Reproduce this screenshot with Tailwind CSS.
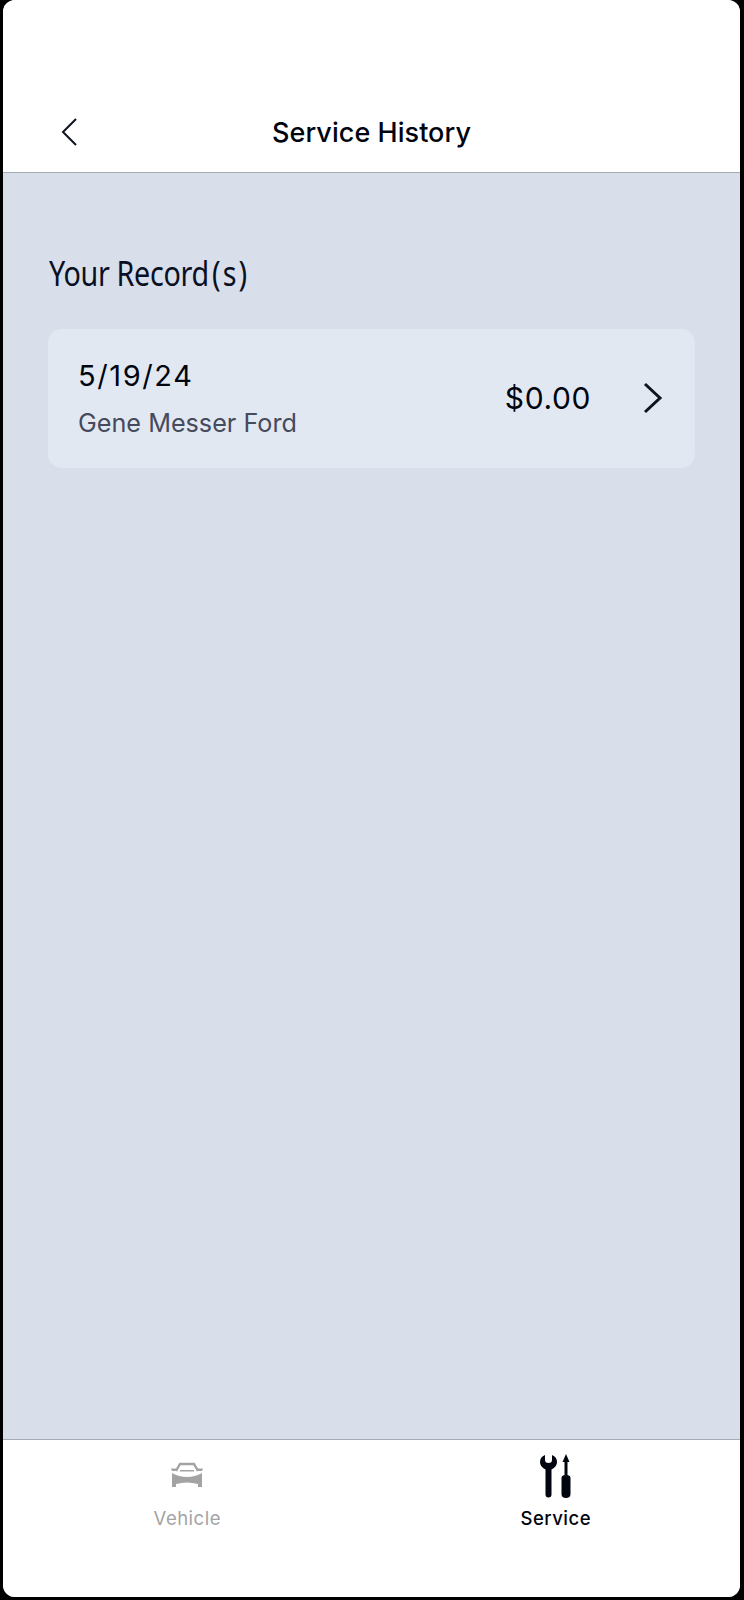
<!DOCTYPE html>
<html lang="en">
<head>
  <meta charset="UTF-8" />
  <meta name="viewport" content="width=device-width, initial-scale=1.0"/>
  <script src="https://cdn.jsdelivr.net/npm/@tailwindcss/browser@4"></script>
  <title>Service History</title>
</head>
<body class="bg-black">
  <div class="w-[744px] h-[1600px] bg-black pl-[3px] pb-[3px] font-['Inter',sans-serif]">
    <div class="w-[737px] h-[1597px] rounded-[12px] overflow-hidden flex flex-col bg-[#d8dfeb]">

      <header class="h-[173px] shrink-0 bg-white border-b border-[#a3acb5] relative flex items-end justify-center pb-[24px]">
        <button class="absolute left-[58px] top-[118px]">
          <svg width="16" height="28" viewBox="0 0 16 28" fill="none" stroke="#10141f" stroke-width="2"><path d="M15 1 L2 14 L15 27"/></svg>
        </button>
        <h1 class="text-[27px] leading-[30px] font-medium text-[#00050f] tracking-[0.05px]">Service History</h1>
      </header>

      <main class="flex-1 px-[45px] pt-[79px]">
        <h2 class="font-['Noto_Sans',sans-serif] text-[35px] leading-[42px] text-[#0a1024] whitespace-nowrap origin-left scale-x-[0.82] ml-[1px] tracking-[-0.4px]">Your Record<span class="tracking-[2.5px] ml-[4px]">(s)</span></h2>
        <div class="mt-[35px] h-[139px] rounded-[14px] bg-[#e2e8f2] flex items-center pl-[30px] pr-[32px]">
          <div class="flex-1 -mt-[1px]">
            <div class="text-[29px] leading-[36px] text-[#00050f] tracking-[1.6px]">5/19/24</div>
            <div class="mt-[13px] text-[25.2px] leading-[32px] text-[#454a5c]">Gene Messer Ford</div>
          </div>
          <div class="text-[30px] leading-[36px] text-[#00050f] tracking-[0.6px] mr-[52px] -mt-[2px]">$0.00</div>
          <svg class="-mt-[2px]" width="20" height="32" viewBox="0 0 20 32" fill="none" stroke="#10141f" stroke-width="3"><path d="M2 2 L17 16 L2 30"/></svg>
        </div>
      </main>

      <nav class="h-[158px] shrink-0 bg-white border-t border-[#a3acb5] grid grid-cols-2">
        <div class="flex flex-col items-center pt-[22px]">
          <svg width="32" height="26" viewBox="0 0 32 26" fill="#a3a3a3">
            <path d="M5 9 L9 2 H23 L27 9" fill="none" stroke="#a3a3a3" stroke-width="2.4"/>
            <path d="M9 9.5 H23 V8 H9 Z"/>
            <path d="M0 6.5 H6 V9 H1 Z M26 6.5 H32 L31 9 H26 Z"/>
            <path d="M1 11 Q8 15 16 15 Q24 15 31 11 V25 H27 V22 Q16 19 5 22 V25 H1 Z"/>
          </svg>
          <span class="mt-[18px] text-[18.5px] leading-[24px] tracking-[0.5px] text-[#a3a3a3]">Vehicle</span>
        </div>
        <div class="flex flex-col items-center pt-[14px]">
          <svg width="31" height="44" viewBox="0 0 31 44" fill="#00050f">
            <path d="M5 1 V6 Q5 9 8.5 9 Q12 9 12 6 V1 Q17 3 17 8 Q17 13 11.5 15.5 V40.5 Q11.5 43.5 8.5 43.5 Q5.5 43.5 5.5 40.5 V15.5 Q0 13 0 8 Q0 3 5 1 Z"/>
            <path d="M26 0 L29.5 8 H27.5 V21 Q30.5 21.5 30.5 24 V40 Q30.5 44 26 44 Q21.5 44 21.5 40 V24 Q21.5 21.5 24.5 21 V8 H22.5 Z"/>
          </svg>
          <span class="mt-[8px] text-[18.5px] leading-[24px] tracking-[0.5px] text-[#00050f] font-medium">Service</span>
        </div>
      </nav>

    </div>
  </div>
</body>
</html>
